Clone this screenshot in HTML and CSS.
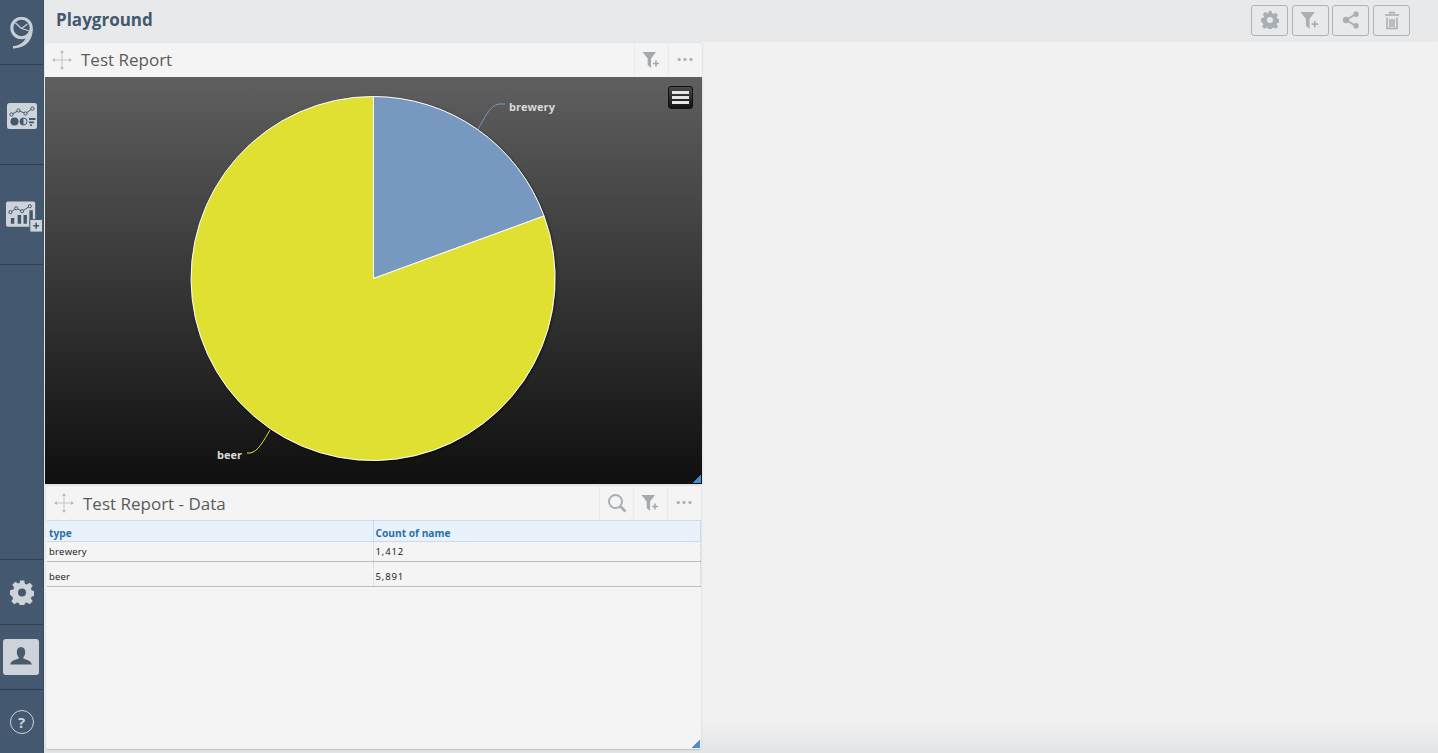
FILE: index.html
```html
<!DOCTYPE html>
<html lang="en">
<head>
<meta charset="utf-8">
<title>Playground</title>
<link rel="stylesheet" href="styles.css">
</head>
<body>
<svg class="defs" width="0" height="0" aria-hidden="true">
  <defs>
    <symbol id="gear" viewBox="0 0 24 24"><path fill-rule="evenodd" d="M9.800 0h4.400l.7 3.300 2 .8 2.800-1.800 3 3-1.800 2.800.8 2 3.300.7v4.400l-3.300.7-.8 2 1.800 2.800-3 3-2.800-1.800-2 .8-.7 3.300H9.800l-.7-3.300-2-.8-2.800 1.800-3-3 1.800-2.800-.8-2L-.0 14.200V9.800l3.300-.7.8-2-1.800-2.800 3-3 2.800 1.800 2-.8zM12 8a4 4 0 1 0 0 8 4 4 0 0 0 0-8z"/></symbol>
    <symbol id="funnel" viewBox="0 0 18 16"><path d="M0 0h13.500L8.600 6.500V16L5.200 13V6.500z"/><path d="M12.700 8.500h1.600v2.200h2.300v1.600h-2.300v2.200h-1.600v-2.200h-2.200v-1.600h2.200z"/></symbol>
    <symbol id="move" viewBox="0 0 20 20"><path d="M10 1v18M1 10h18" fill="none" stroke="#c3c6c9" stroke-width="1"/><path d="M10 0l2 3H8zM10 20l2-3H8zM0 10l3-2v4zM20 10l-3-2v4z" fill="#b9bcbf"/></symbol>
  </defs>
</svg>
<div class="app">
  <nav class="sidebar">
    <div class="nav-cell nav-logo">
      <svg width="24" height="32" viewBox="0 0 24 32" class="logo-icon">
        <circle cx="11.500" cy="11" r="9.700" fill="none" stroke="#c8ced4" stroke-width="3"/>
        <path d="M11.500 11.500l6-4.500M11.500 11.500l8 2.500M11.500 11.500L5.500 6" stroke="#c8ced4" stroke-width="1.300" fill="none"/>
        <path d="M22.800 11C22.800 22 18 30.500 3 31.500L3 29C11 28.500 15.500 24 17.500 17z" fill="#c8ced4"/>
      </svg>
    </div>
    <div class="nav-cell nav-tall">
      <svg width="30" height="26" viewBox="0 0 30 26" class="report-icon">
        <rect width="30" height="26" rx="2.500" fill="#cdd3d9"/>
        <path d="M4.500 11.500l7-4 7 3 7-5" fill="none" stroke="#44586d" stroke-width="1"/>
        <circle cx="4.500" cy="11.500" r="1.600" fill="#cdd3d9" stroke="#44586d"/><circle cx="11.500" cy="7.500" r="1.600" fill="#cdd3d9" stroke="#44586d"/><circle cx="18.500" cy="10.500" r="1.600" fill="#cdd3d9" stroke="#44586d"/><circle cx="25.500" cy="5.500" r="1.600" fill="#cdd3d9" stroke="#44586d"/>
        <circle cx="7.500" cy="18.500" r="4" fill="#44586d"/>
        <circle cx="16.500" cy="18.500" r="3.500" fill="none" stroke="#44586d"/><path d="M16.500 15a3.500 3.500 0 0 0 0 7z" fill="#44586d"/>
        <path d="M22 15h6.500v2H22zM22 18.500h5v1.700h-5zM23 21.500h2v1.500h-2z" fill="#44586d"/>
      </svg>
    </div>
    <div class="nav-cell nav-tall">
      <svg width="38" height="32" viewBox="0 0 38 32" class="add-chart">
        <rect width="30" height="26" rx="2" fill="#cdd3d9"/>
        <path d="M4.500 11l6-4 6 3 8-5" fill="none" stroke="#44586d" stroke-width="1"/>
        <circle cx="4.500" cy="11" r="1.600" fill="#cdd3d9" stroke="#44586d"/><circle cx="10.500" cy="7" r="1.600" fill="#cdd3d9" stroke="#44586d"/><circle cx="16.500" cy="10" r="1.600" fill="#cdd3d9" stroke="#44586d"/><circle cx="24.500" cy="5" r="1.600" fill="#cdd3d9" stroke="#44586d"/>
        <path d="M5 17h3.500v6H5zM12 14h3.500v9H12zM18 14h3.500v9H18zM24 9h3.500v14H24z" fill="#44586d"/>
        <rect x="24.500" y="18.500" width="13" height="13" rx="1" fill="#cdd3d9" stroke="#44586d"/>
        <path d="M30.200 22h1.600v2.200H34v1.600h-2.200V28h-1.600v-2.200H28v-1.600h2.200z" fill="#44586d"/>
      </svg>
    </div>
    <div class="nav-cell nav-spacer"></div>
    <div class="nav-cell nav-short">
      <svg width="24" height="25" class="side-gear"><use href="#gear"/></svg>
    </div>
    <div class="nav-cell nav-short">
      <div class="avatar">
        <svg width="24" height="24" viewBox="0 0 24 24"><path d="M12 2c2.800 0 4.200 2.300 4.200 5 0 2.400-1 4.200-1.800 5.300v1.500c3.500.8 7.600 2 8.400 5.700H1.200c.8-3.700 4.900-4.900 8.400-5.700v-1.500C8.800 11.200 7.800 9.400 7.800 7c0-2.700 1.400-5 4.200-5z" fill="#475a6e"/></svg>
      </div>
    </div>
    <div class="nav-cell nav-help">
      <span class="help">?</span>
    </div>
  </nav>
  <div class="content">
    <header class="topbar">
      <h1 class="page-title">Playground</h1>
      <div class="tools">
        <button class="tool"><svg width="18" height="18" class="tool-icon"><use href="#gear"/></svg></button>
        <button class="tool"><svg width="20" height="17" class="tool-icon"><use href="#funnel"/></svg></button>
        <button class="tool"><svg width="18" height="18" viewBox="0 0 18 18" class="tool-icon"><path d="M14 3L4 9l10 6" fill="none" stroke="#a9afb5" stroke-width="1.800"/><circle cx="4" cy="9" r="3.200"/><circle cx="14" cy="3.200" r="2.700"/><circle cx="14" cy="14.800" r="2.700"/></svg></button>
        <button class="tool"><svg width="16" height="19" viewBox="0 0 16 19" class="trash"><path d="M1 4h14M6 3V1.500h4V3M3 6.500V17.500h10V6.500M6 8v8M8 8v8M10 8v8" fill="none" stroke="#a9afb5" stroke-width="1.500"/></svg></button>
      </div>
    </header>
    <main class="board">
      <section class="panel panel-chart">
        <div class="panel-head">
          <svg width="20" height="20" class="move"><use href="#move"/></svg>
          <h2 class="panel-title">Test Report</h2>
          <div class="head-btn"><svg width="19" height="16" class="head-icon"><use href="#funnel"/></svg></div>
          <div class="head-btn head-dots">···</div>
        </div>
        <div class="chart">
          <svg class="pie" width="656" height="407" viewBox="0 0 656 407">
            <defs>
              <filter id="pieshadow" x="-5%" y="-5%" width="110%" height="110%"><feDropShadow dx="1" dy="1" stdDeviation="1.500" flood-color="#000" flood-opacity=".5"/></filter>
            </defs>
            <g filter="url(#pieshadow)" stroke="#fff" stroke-width="1">
              <path d="M328.500 201.500L328.500 19.500A182 182 0 0 1 499 139z" fill="#7798bf"/>
              <path d="M328.500 201.500L499 139A182 182 0 1 1 328.500 19.500z" fill="#dfe032"/>
            </g>
            <path d="M433 52c6-10 12-24 21-25h6" fill="none" stroke="#7798bf" stroke-width="1"/>
            <path d="M225 353c-6 10-12 22-20 23h-3" fill="none" stroke="#dfe032" stroke-width="1"/>
            <text x="464" y="34" class="pie-label">brewery</text>
            <text x="172" y="382" class="pie-label">beer</text>
          </svg>
          <div class="chart-menu"><span></span><span></span><span></span></div>
          <i class="grip"></i>
        </div>
      </section>
      <section class="panel panel-data">
        <div class="panel-head panel-head-data">
          <svg width="20" height="20" class="move"><use href="#move"/></svg>
          <h2 class="panel-title">Test Report - Data</h2>
          <div class="head-btn"><svg width="20" height="20" viewBox="0 0 20 20"><circle cx="8.500" cy="8.500" r="6.500" fill="none" stroke="#a9afb5" stroke-width="2"/><path d="M13 13l5.500 5.500" stroke="#a9afb5" stroke-width="2.800"/></svg></div>
          <div class="head-btn"><svg width="19" height="16" class="head-icon"><use href="#funnel"/></svg></div>
          <div class="head-btn head-dots">···</div>
        </div>
        <div class="table-wrap">
          <table class="grid">
            <thead><tr><th class="col-a">type</th><th>Count of name</th></tr></thead>
            <tbody>
              <tr class="row-first"><td class="col-a">brewery</td><td class="num">1,412</td></tr>
              <tr class="row-second"><td class="col-a">beer</td><td class="num">5,891</td></tr>
            </tbody>
          </table>
        </div>
        <i class="grip"></i>
      </section>
    </main>
  </div>
</div>
</body>
</html>
```
FILE: styles.css
```css
* { box-sizing: border-box; }
html, body { margin: 0; height: 100%; overflow: hidden; }
body {
  font-family: "Open Sans", "Noto Sans", sans-serif;
  background: linear-gradient(transparent 722px, #e2e4e6 753px), repeating-conic-gradient(rgba(255,255,255,.25) 0 25%, transparent 0 50%) 0 0 / 2px 2px, #efefef;
}
.defs { position: absolute; }
.app { display: flex; height: 753px; }

.sidebar { width: 44px; flex: none; background: #44596f; display: flex; flex-direction: column; border-right: 1px solid #3a4c5f; }
.nav-cell { display: flex; align-items: center; justify-content: center; border-bottom: 1px solid #2f3f50; flex: none; }
.nav-logo { height: 65px; }
.nav-tall { height: 100px; }
.nav-spacer { flex: 1; }
.nav-short { height: 65px; }
.nav-help { height: 63px; border-bottom: 0; }
.logo-icon { margin-top: 1px; }
.report-icon { margin-top: 3px; }
.add-chart { margin-left: 6px; margin-top: 4px; }
.side-gear { fill: #cdd3d9; }
.avatar { width: 36px; height: 36px; margin-left: -1px; border-radius: 3px; background: #cdd3d9; display: flex; align-items: center; justify-content: center; }
.help { width: 24px; height: 24px; border: 1px solid #cdd3d9; border-radius: 50%; color: #cdd3d9; font-size: 15px; font-weight: 700; line-height: 22px; text-align: center; }

.content { flex: 1; min-width: 0; display: flex; flex-direction: column; }
.topbar { height: 42px; flex: none; display: flex; align-items: center; justify-content: space-between; padding: 0 28px 2px 12px; background: repeating-conic-gradient(rgba(255,255,255,.18) 0 25%, transparent 0 50%) 0 0 / 2px 2px, #e5e7e9; }
.page-title { margin: 0 0 2px; font-size: 17px; font-weight: 700; color: #44596f; }
.tools { display: flex; gap: 3.660px; }
.tool { width: 37px; height: 31px; padding: 0; background: transparent; border: 1px solid #adb3b9; border-radius: 3px; display: flex; align-items: center; justify-content: center; }
.tool-icon { fill: #a9afb5; }

.board { flex: 1; padding: 1px 0 0 1px; display: flex; flex-direction: column; gap: 2px; width: 658px; }
.panel { background: #f4f4f4; border-radius: 3px 3px 0 0; position: relative; box-shadow: 0 0 2px #bfc3c8; }
.panel-chart { height: 441px; }
.panel-data { height: 264px; margin-left: 1px; margin-right: 1px; border-bottom: 1px solid #c4c8cc; border-radius: 3px; }
.panel-head { height: 34px; display: flex; align-items: center; padding-left: 7px; }
.panel-head-data { padding-left: 8px; }
.panel-head .move { flex: none; }
.panel-title { margin: 0 0 2px 9px; flex: 1; font-size: 17px; font-weight: 400; color: #5b5b5b; line-height: 1; }
.panel-head-data .panel-title { margin: 0 0 0 9px; }
.head-btn { width: 34px; height: 34px; display: flex; align-items: center; justify-content: center; border-left: 1px solid #ebebeb; }
.head-icon { fill: #a3a9af; }
.head-dots { color: #a9afb5; font-size: 17px; font-weight: 700; letter-spacing: 1px; line-height: 34px; }

.chart { position: relative; height: 407px; background: repeating-conic-gradient(rgba(255,255,255,.035) 0 25%, transparent 0 50%) 0 0 / 2px 2px, linear-gradient(#5c5c5c, #0b0b0b); }
.pie { display: block; }
.pie-label { font: 700 11px "Open Sans", sans-serif; fill: #d8d8d8; letter-spacing: .05px; }
.chart-menu { position: absolute; top: 9px; right: 9px; width: 25px; height: 23px; background: linear-gradient(#4a4a4a, #111); border: 1px solid #111; border-radius: 3px; display: flex; flex-direction: column; justify-content: center; gap: 2px; padding: 0 3px; }
.chart-menu span { height: 3px; background: #e6e6e6; }
.grip { position: absolute; right: 1px; bottom: 1px; width: 8px; height: 8px; background: linear-gradient(135deg, transparent 50%, #4a8cc7 50%); }

.table-wrap { padding: 0 0 0 1px; }
.grid { width: 100%; border-collapse: collapse; table-layout: fixed; font-size: 9.500px; color: #111; }
.grid th { height: 21px; padding: 3px 2px 0; text-align: left; vertical-align: middle; font-weight: 700; font-size: 10.200px; color: #2c6fa8; background: repeating-conic-gradient(rgba(255,255,255,.35) 0 25%, transparent 0 50%) 0 0 / 2px 2px, #e4eff9; border: 1px solid #c8dcee; border-width: 1px 1px 1px 0; }
.grid td { padding: 0 2px; border-bottom: 1px solid #bdbdbd; border-right: 1px dotted #cfcfcf; letter-spacing: .2px; }
.row-first td { height: 20px; }
.row-second td { height: 25px; padding-top: 4px; }
.grid .num { letter-spacing: .9px; }
.col-a { width: 326px; }
```
